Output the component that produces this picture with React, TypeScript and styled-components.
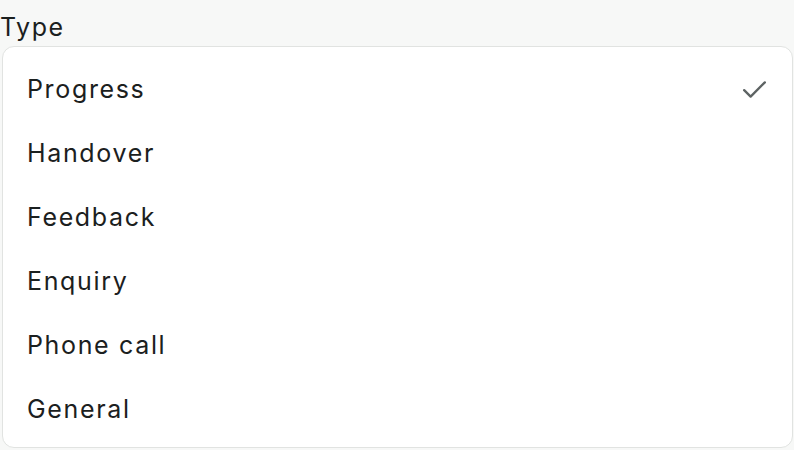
import React from "react";
import styled, { createGlobalStyle } from "styled-components";

const GlobalStyle = createGlobalStyle`
  html, body {
    margin: 0;
    padding: 0;
    background: #f7f8f7;
    font-family: Inter, "Noto Sans", sans-serif;
    color: #1b2020;
  }
`;

const Page = styled.div`
  width: 794px;
  height: 450px;
  overflow: hidden;
  display: flex;
  flex-direction: column;
  padding: 0 1px 0 2px;
  box-sizing: border-box;
`;

const Label = styled.div`
  font-size: 25px;
  line-height: 30px;
  letter-spacing: 1.5px;
  height: 46px;
  padding-top: 12px;
  box-sizing: border-box;
  margin-left: -2px;
  color: #1b2020;
`;

const Menu = styled.ul`
  list-style: none;
  margin: 0;
  padding: 10px 0 8px;
  background: #ffffff;
  border: 1.5px solid #e1e3e1;
  border-radius: 12px;
  box-sizing: border-box;
  height: 402px;
`;

const Option = styled.li<{ $selected?: boolean }>`
  height: 64px;
  display: flex;
  align-items: center;
  justify-content: space-between;
  padding: 0 22px 0 24px;
  font-size: 25px;
  letter-spacing: 1.65px;
  color: #1b2020;
`;

const Check = styled.svg`
  width: 31px;
  height: 31px;
  color: #5d6363;
`;

const options = ["Progress", "Handover", "Feedback", "Enquiry", "Phone call", "General"];

export default function App() {
  return (
    <>
      <GlobalStyle />
      <Page>
        <Label>Type</Label>
        <Menu role="listbox">
          {options.map((o, i) => (
            <Option key={o} $selected={i === 0} role="option" aria-selected={i === 0}>
              <span>{o}</span>
              {i === 0 && (
                <Check viewBox="0 0 24 24" fill="none" stroke="currentColor" strokeWidth="1.8" strokeLinecap="round" strokeLinejoin="round">
                  <path d="M4 12.5l5 5L20 6.5" />
                </Check>
              )}
            </Option>
          ))}
        </Menu>
      </Page>
    </>
  );
}
